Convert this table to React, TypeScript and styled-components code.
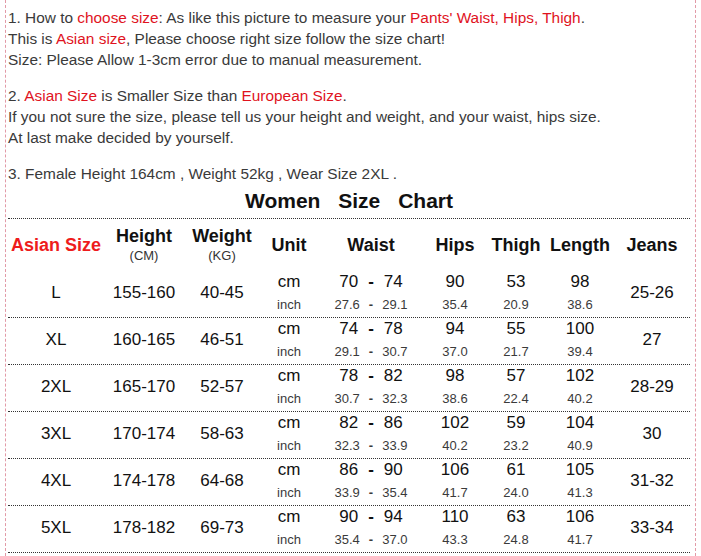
import styled, { createGlobalStyle } from "styled-components";

const GlobalStyle = createGlobalStyle`
  html, body {
    margin: 0;
    padding: 0;
    background: #fff;
  }
  body {
    font-family: "Liberation Sans", Arial, sans-serif;
  }
`;

const Frame = styled.div`
  margin: 0 5px;
  height: 556px;
  box-sizing: border-box;
  padding: 7px 5px 0 2px;
  border-left: 1px dashed #e29aa7;
  border-right: 1px dashed #e29aa7;
  overflow: hidden;
`;

const Intro = styled.p<{ $last?: boolean }>`
  margin: 0 0 ${(p) => (p.$last ? "0" : "15px")};
  font-size: 15.4px;
  line-height: 21px;
  color: #3a3a3a;
`;

const Red = styled.span`
  color: #e0131e;
`;

const Title = styled.h2`
  margin: 4px 0 0;
  font-size: 21px;
  line-height: 26px;
  font-weight: bold;
  text-align: center;
  color: #111;
  word-spacing: 12px;
`;

const Table = styled.div`
  margin-top: 4px;
  border-top: 1px dotted #333;
`;

const COLS = "96px 80px 76px 58px 106px 62px 60px 68px 76px";

const HeadRow = styled.div`
  display: grid;
  grid-template-columns: ${COLS};
  height: 52px;
  align-items: center;
  text-align: center;
`;

const Row = styled.div`
  display: grid;
  grid-template-columns: ${COLS};
  grid-template-rows: 22px 22px;
  height: 46px;
  border-bottom: 1px dotted #333;
  align-items: center;
  text-align: center;
  color: #111;
`;

const HeadCell = styled.div<{ $red?: boolean }>`
  font-size: 18px;
  font-weight: bold;
  color: ${(p) => (p.$red ? "#ee1c1c" : "#111")};
  line-height: 21px;
`;

const HeadSub = styled.div`
  font-size: 13px;
  font-weight: normal;
  color: #333;
  line-height: 17px;
`;

const Tall = styled.div<{ $col: number }>`
  grid-column: ${(p) => p.$col};
  grid-row: 1 / span 2;
  font-size: 17px;
`;

const Metric = styled.div<{ $col: number; $small?: boolean }>`
  grid-column: ${(p) => p.$col};
  grid-row: ${(p) => (p.$small ? 2 : 1)};
  font-size: ${(p) => (p.$small ? "13px" : "17px")};
  color: ${(p) => (p.$small ? "#3a3a3a" : "#111")};
`;

const Range = styled.div<{ $small?: boolean }>`
  grid-column: 5;
  grid-row: ${(p) => (p.$small ? 2 : 1)};
  display: grid;
  grid-template-columns: 1fr auto 1fr;
  column-gap: ${(p) => (p.$small ? "9px" : "10px")};
  font-size: ${(p) => (p.$small ? "13px" : "17px")};
  color: ${(p) => (p.$small ? "#3a3a3a" : "#111")};
`;

const RangeLeft = styled.span`
  text-align: right;
`;

const RangeRight = styled.span`
  text-align: left;
`;

const Dash = styled.span`
  font-weight: bold;
`;

type SizeRow = {
  size: string;
  height: string;
  weight: string;
  waist: [string, string];
  waistIn: [string, string];
  hips: [string, string];
  thigh: [string, string];
  length: [string, string];
  jeans: string;
};

const rows: SizeRow[] = [
  { size: "L", height: "155-160", weight: "40-45", waist: ["70", "74"], waistIn: ["27.6", "29.1"], hips: ["90", "35.4"], thigh: ["53", "20.9"], length: ["98", "38.6"], jeans: "25-26" },
  { size: "XL", height: "160-165", weight: "46-51", waist: ["74", "78"], waistIn: ["29.1", "30.7"], hips: ["94", "37.0"], thigh: ["55", "21.7"], length: ["100", "39.4"], jeans: "27" },
  { size: "2XL", height: "165-170", weight: "52-57", waist: ["78", "82"], waistIn: ["30.7", "32.3"], hips: ["98", "38.6"], thigh: ["57", "22.4"], length: ["102", "40.2"], jeans: "28-29" },
  { size: "3XL", height: "170-174", weight: "58-63", waist: ["82", "86"], waistIn: ["32.3", "33.9"], hips: ["102", "40.2"], thigh: ["59", "23.2"], length: ["104", "40.9"], jeans: "30" },
  { size: "4XL", height: "174-178", weight: "64-68", waist: ["86", "90"], waistIn: ["33.9", "35.4"], hips: ["106", "41.7"], thigh: ["61", "24.0"], length: ["105", "41.3"], jeans: "31-32" },
  { size: "5XL", height: "178-182", weight: "69-73", waist: ["90", "94"], waistIn: ["35.4", "37.0"], hips: ["110", "43.3"], thigh: ["63", "24.8"], length: ["106", "41.7"], jeans: "33-34" },
];

const App = () => {
  return (
    <>
      <GlobalStyle />
      <Frame>
        <Intro>
          1. How to <Red>choose size</Red>: As like this picture to measure your <Red>Pants' Waist, Hips, Thigh</Red>.
          <br />
          This is <Red>Asian size</Red>, Please choose right size follow the size chart!
          <br />
          Size: Please Allow 1-3cm error due to manual measurement.
        </Intro>
        <Intro>
          2. <Red>Asian Size</Red> is Smaller Size than <Red>European Size</Red>.
          <br />
          If you not sure the size, please tell us your height and weight, and your waist, hips size.
          <br />
          At last make decided by yourself.
        </Intro>
        <Intro $last>3. Female Height 164cm , Weight 52kg , Wear Size 2XL .</Intro>
        <Title>Women Size Chart</Title>
        <Table>
          <HeadRow>
            <HeadCell $red>Asian Size</HeadCell>
            <HeadCell>
              Height
              <HeadSub>(CM)</HeadSub>
            </HeadCell>
            <HeadCell>
              Weight
              <HeadSub>(KG)</HeadSub>
            </HeadCell>
            <HeadCell>Unit</HeadCell>
            <HeadCell>Waist</HeadCell>
            <HeadCell>Hips</HeadCell>
            <HeadCell>Thigh</HeadCell>
            <HeadCell>Length</HeadCell>
            <HeadCell>Jeans</HeadCell>
          </HeadRow>
          {rows.map((r) => (
            <Row key={r.size}>
              <Tall $col={1}>{r.size}</Tall>
              <Tall $col={2}>{r.height}</Tall>
              <Tall $col={3}>{r.weight}</Tall>
              <Metric $col={4}>cm</Metric>
              <Metric $col={4} $small>inch</Metric>
              <Range>
                <RangeLeft>{r.waist[0]}</RangeLeft>
                <Dash>-</Dash>
                <RangeRight>{r.waist[1]}</RangeRight>
              </Range>
              <Range $small>
                <RangeLeft>{r.waistIn[0]}</RangeLeft>
                <Dash>-</Dash>
                <RangeRight>{r.waistIn[1]}</RangeRight>
              </Range>
              <Metric $col={6}>{r.hips[0]}</Metric>
              <Metric $col={6} $small>{r.hips[1]}</Metric>
              <Metric $col={7}>{r.thigh[0]}</Metric>
              <Metric $col={7} $small>{r.thigh[1]}</Metric>
              <Metric $col={8}>{r.length[0]}</Metric>
              <Metric $col={8} $small>{r.length[1]}</Metric>
              <Tall $col={9}>{r.jeans}</Tall>
            </Row>
          ))}
        </Table>
      </Frame>
    </>
  );
};

export default App;
